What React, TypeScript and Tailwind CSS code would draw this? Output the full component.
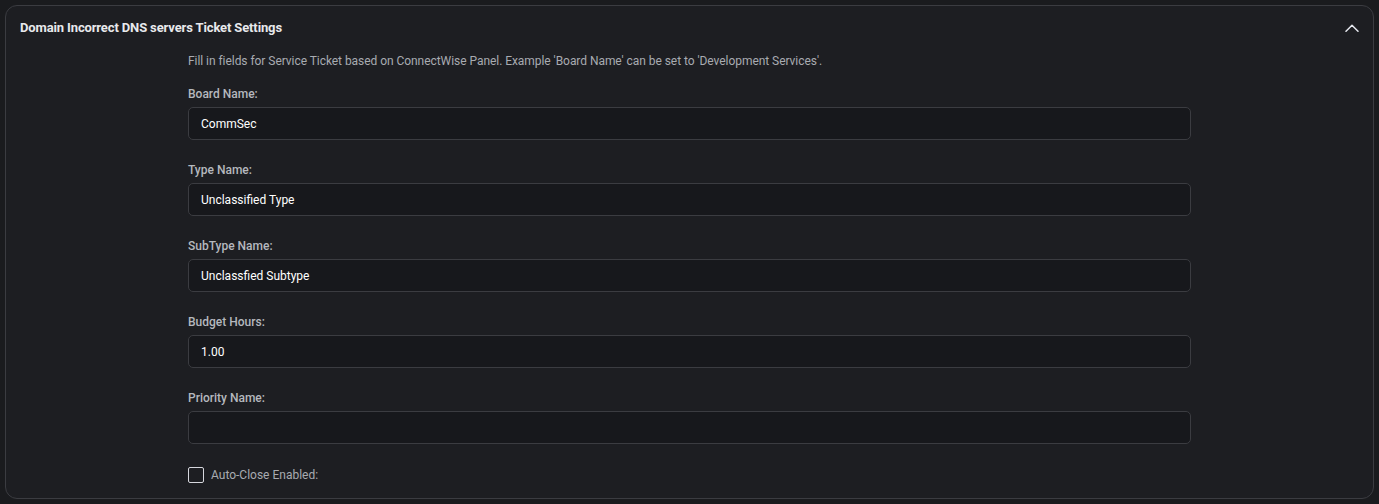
import React from "react";

const fields = [
  { label: "Board Name:", value: "CommSec" },
  { label: "Type Name:", value: "Unclassified Type" },
  { label: "SubType Name:", value: "Unclassfied Subtype" },
  { label: "Budget Hours:", value: "1.00" },
  { label: "Priority Name:", value: "" },
];

export default function App() {
  return (
    <div
      className="h-[504px] w-[1379px] bg-[#1a1b1e] p-[5px]"
      style={{ fontFamily: "Roboto, 'Liberation Sans', sans-serif" }}
    >
      <div className="h-[494px] rounded-[12px] border border-[#3b3c41] bg-[#1d1e22]">
        <div className="flex h-[44px] items-center justify-between pl-[14px] pr-[14px]">
          <span className="text-[13px] font-bold tracking-[-0.13px] text-[#e8e9ec]">
            Domain Incorrect DNS servers Ticket Settings
          </span>
          <svg width="14" height="8" viewBox="0 0 14 8" fill="none">
            <path d="M1 7.2L7 1.2L13 7.2" stroke="#e6e8ef" strokeWidth="1.5" strokeLinecap="round" strokeLinejoin="round" />
          </svg>
        </div>
        <div className="px-[182px] pt-[3px]">
          <p className="text-[12px] leading-[16px] tracking-[-0.05px] text-[#a8abb1]">
            Fill in fields for Service Ticket based on ConnectWise Panel. Example 'Board Name' can be set to 'Development Services'.
          </p>
          <div className="mt-[17px] flex flex-col gap-[22px]">
            {fields.map((f) => (
              <div key={f.label} className="flex flex-col">
                <label className="text-[12px] font-medium leading-[16px] text-[#b5b8be]">{f.label}</label>
                <div className="mt-[5px] flex h-[33px] items-center rounded-[5px] border border-[#3b3c41] bg-[#17181c] px-[12px] text-[12px] text-white">
                  {f.value}
                </div>
              </div>
            ))}
          </div>
          <div className="mt-[23px] flex h-[16px] items-center gap-[7px]">
            <div className="h-[16px] w-[16px] rounded-[2px] border border-[#d6d7dd]" />
            <span className="text-[12px] text-[#a8abb1]">Auto-Close Enabled:</span>
          </div>
        </div>
      </div>
    </div>
  );
}
